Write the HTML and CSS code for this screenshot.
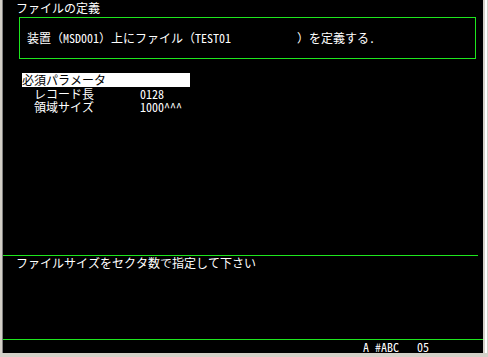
FILE: index.html
```html
<!DOCTYPE html>
<html>
  <head>
    <title>ファイルの定義</title>
    <link rel="stylesheet" href="styles.css">
  </head>
  <body>
    <div class="frame">
      <div class="screen">
        <div class="title">ファイルの定義</div>

        <div class="prompt">装置（MSD001）上にファイル（TEST01           ）を定義する.</div>

        <div class="params">
          <div class="group">必須パラメータ</div>
          <div class="param">
            <span class="label">レコード長</span>
            <span class="value">0128</span>
          </div>
          <div class="param">
            <span class="label">領域サイズ</span>
            <span class="value">1000^^^</span>
          </div>
        </div>

        <div class="message">ファイルサイズをセクタ数で指定して下さい</div>

        <div class="status">A #ABC   05</div>
      </div>
      <div class="rail"></div>
    </div>
  </body>
</html>
```

FILE: styles.css
```css
:root {
  --panel: #d4d0c8;
  --screen: #000000;
  --text: #ffffff;
  --line: #1ee61e;
}

body {
  margin: 0;
  background-color: var(--panel);
  font-family: "Noto Sans Mono CJK JP", "Noto Sans CJK JP", "DejaVu Sans Mono",
    monospace;
  font-size: 12px;
  line-height: 13px;
  color: var(--text);
}

.frame {
  display: flex;
  padding-left: 2px;
}

.screen {
  display: flex;
  flex-direction: column;
  width: 480px;
  height: 353px;
  border-left: 1px solid #808080;
  background-color: var(--screen);
}

.rail {
  width: 2px;
  height: 353px;
  margin-left: 2px;
  background-color: #ffffff;
}

.title {
  height: 17px;
  line-height: 16px;
  padding-left: 13px;
}

.prompt {
  margin: 0 7px 0 16px;
  border: 1px solid var(--line);
  height: 40px;
  line-height: 40px;
  padding-left: 7px;
  white-space: pre;
}

.params {
  flex: 1;
  margin-top: 14px;
  padding-left: 19px;
}

.group {
  width: 168px;
  height: 14px;
  line-height: 14px;
  background-color: var(--text);
  color: var(--screen);
}

.param {
  display: flex;
  line-height: 13px;
  padding-left: 12px;
}

.param .label {
  width: 106px;
}

.message {
  height: 83px;
  margin-right: 5px;
  border-top: 1px solid var(--line);
  padding-left: 13px;
  line-height: 14px;
}

.status {
  height: 13px;
  border-top: 1px solid var(--line);
  padding-left: 360px;
  line-height: 14px;
  white-space: pre;
}
```
